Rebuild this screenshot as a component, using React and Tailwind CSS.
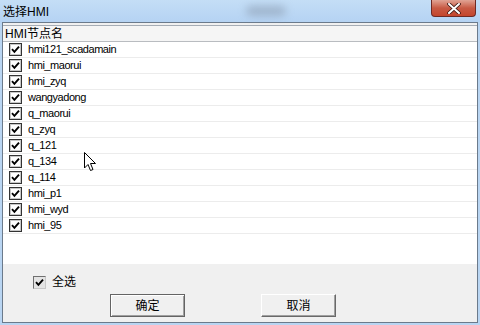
import React from 'react';

const nodes = [
    'hmi121_scadamain',
    'hmi_maorui',
    'hmi_zyq',
    'wangyadong',
    'q_maorui',
    'q_zyq',
    'q_121',
    'q_134',
    'q_114',
    'hmi_p1',
    'hmi_wyd',
    'hmi_95',
];

const font = { fontFamily: 'Tahoma, "Liberation Sans", "Noto Sans CJK SC", sans-serif' };

const Check = ({ muted }) => (
    <span className={`w-[13px] h-[13px] flex items-center justify-center border ${muted ? 'border-t-[#707070] border-l-[#707070] border-b-[#c8c8c8] border-r-[#c8c8c8] bg-[#e4e4e4]' : 'border-[#333333] bg-white shadow-[inset_0_0_0_1px_#c8c8c8]'}`}>
        <svg width="9" height="9" viewBox="0 0 9 9">
            <path d="M1 4.2 L3.4 6.8 L8 1.6" fill="none" stroke="#000" strokeWidth="1.9" />
        </svg>
    </span>
);

const Boton = ({ children, primary }) => (
    <button
        type="button"
        className={`w-[75px] h-[23px] bg-[#f0f0f0] text-[12px] text-black flex items-center justify-center ${primary ? 'border border-[#646464] shadow-[inset_1px_1px_0_#ffffff,inset_-1px_-1px_0_#a0a0a0]' : 'border border-t-white border-l-white border-b-[#696969] border-r-[#696969] shadow-[inset_-1px_-1px_0_#a0a0a0]'}`}
    >
        {children}
    </button>
);

const App = () => {
    return (
        <div className="w-[480px] h-[325px] relative flex flex-col bg-[#b9d5f2] overflow-hidden" style={font}>
            <div className="h-[22px] flex items-center pl-[3px] bg-gradient-to-b from-[#c4def6] to-[#b5d3f3] relative">
                <span className="text-[12px] text-black leading-none pt-[1px]">选择HMI</span>
                <div className="absolute left-[246px] top-[6px] w-[40px] h-[10px] rounded-full bg-[#8a9bb0] blur-[4px] opacity-60" />
                <div className="absolute left-[431px] top-0 w-[45px] h-[17px] rounded-b-[4px] border border-t-0 border-[#6e2a24] bg-gradient-to-b from-[#e0a394] via-[#c75a44] to-[#c4452c] flex items-center justify-center">
                    <svg width="14" height="11" viewBox="0 0 14 11">
                        <path d="M2 1 L12 10 M12 1 L2 10" stroke="#3a1510" strokeWidth="3.6" strokeLinecap="round" />
                        <path d="M2 1 L12 10 M12 1 L2 10" stroke="#ffffff" strokeWidth="2" strokeLinecap="round" />
                    </svg>
                </div>
            </div>
            <div className="flex-1 px-[2px] pb-[2px] flex">
                <div className="flex-1 flex flex-col border border-[#6b7a8b] bg-[#f0f0f0]">
                    <div className="mt-[2px] h-[239px] bg-white border-t border-[#a5acb5] flex flex-col">
                        <div className="h-[16px] flex items-center pl-[2px] bg-[#f5f5f5] border-b border-[#b9bcc0] text-[12px] text-black">
                            HMI节点名
                        </div>
                        {nodes.map((nodo) => (
                            <div key={nodo} className="h-[16px] flex items-center gap-[6px] pl-[6px] border-b border-[#ececec] text-[11px] text-black">
                                <Check />
                                <span className="leading-none tracking-[-0.45px]">{nodo}</span>
                            </div>
                        ))}
                    </div>
                    <div className="mt-[9px] flex items-center gap-[6px] pl-[30px] text-[12px] text-black">
                        <Check muted />
                        <span>全选</span>
                    </div>
                    <div className="mt-[3px] flex pl-[107px] gap-[76px]">
                        <Boton primary>确定</Boton>
                        <Boton>取消</Boton>
                    </div>
                </div>
            </div>
            <svg className="absolute left-[84px] top-[152px]" width="13" height="20" viewBox="0 0 13 20">
                <path d="M0.5 0.5 L0.5 16 L4 12.5 L6.5 18.5 L9 17.5 L6.5 11.5 L11.5 11.5 Z" fill="#ffffff" stroke="#000000" strokeWidth="1" strokeLinejoin="miter" />
            </svg>
        </div>
    );
};

export default App;
